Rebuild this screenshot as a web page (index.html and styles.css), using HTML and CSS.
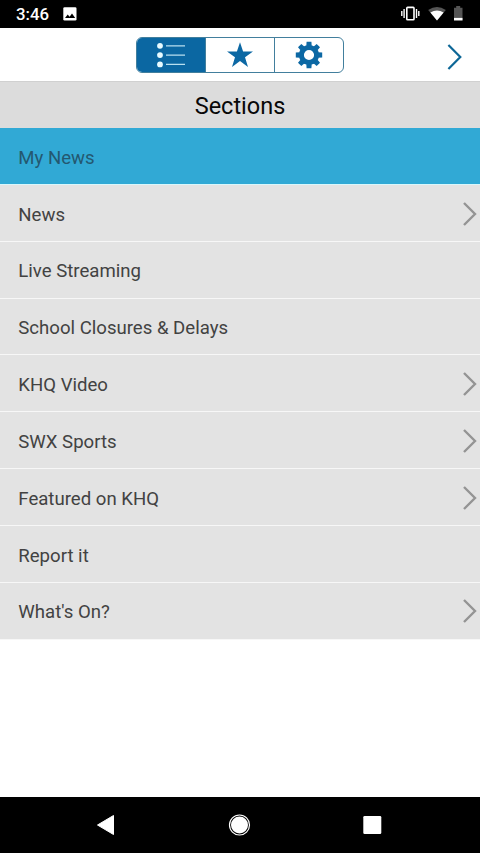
FILE: index.html
```html
<!DOCTYPE html>
<html lang="en">
<head>
<meta charset="utf-8">
<title>Sections</title>
<link rel="stylesheet" href="styles.css">
</head>
<body>
<div class="status">
  <span class="clock">3:46</span>
  <svg class="photo" width="14" height="14" viewBox="0 0 14 14"><rect x=".3" y=".3" width="13.2" height="13.2" rx="1.3" fill="#fff"/><path d="M2 11 4.7 7.5l1.9 2.3L9 6.6l3.2 4.4z" fill="#000"/></svg>
  <svg class="indicators" width="64" height="18" viewBox="0 0 64 18">
    <path d="M1.8 7v5M4.1 5v9M16.500 5v9M18.800 7v5" stroke="#fff" stroke-width="1.4"/>
    <rect x="6.800" y="3.400" width="7.200" height="12.400" rx=".8" fill="none" stroke="#fff" stroke-width="1.6"/>
    <path d="M28.200 5.900Q37 .1 45.800 5.900L37 16.400z" fill="#555"/>
    <path d="M30.400 8.500Q37 4.600 43.600 8.500L37 16.400z" fill="#fff"/>
    <path d="M56.200 2h4v1.700h2.300v12.700h-8.500V3.700h2.200z" fill="#555"/>
    <path d="M54 13.900h8.500v2.500H54z" fill="#fff"/>
  </svg>
</div>
<header class="toolbar">
  <div class="tabs">
    <div class="tab active"><svg width="30" height="26" viewBox="0 0 30 26"><g fill="#e8fbff"><circle cx="4" cy="3.800" r="2.900"/><circle cx="4" cy="13.100" r="2.900"/><circle cx="4" cy="22.400" r="2.900"/></g><path d="M10 3.800h19M10 13.100h19M10 22.400h19" stroke="#b9e0f0" stroke-width="1.300"/></svg></div>
    <div class="tab"><svg width="28" height="28" viewBox="-14 -14 28 28"><path d="M0-12.800 3.100-3.600 13-3.600 5 2.200 8 12 0 6.100-8 12-5 2.200-13-3.600-3.100-3.600z" fill="#0c68a4"/></svg></div>
    <div class="tab"><svg width="28" height="28" viewBox="-14 -14 28 28"><circle r="7.600" fill="none" stroke="#0c68a4" stroke-width="5"/><g fill="#0c68a4"><path id="tooth" d="M-2.700-9-2.400-13.200H2.400L2.700-9z"/><use href="#tooth" transform="rotate(45)"/><use href="#tooth" transform="rotate(90)"/><use href="#tooth" transform="rotate(135)"/><use href="#tooth" transform="rotate(180)"/><use href="#tooth" transform="rotate(225)"/><use href="#tooth" transform="rotate(270)"/><use href="#tooth" transform="rotate(315)"/></g></svg></div>
  </div>
  <svg class="forward" width="16" height="26" viewBox="0 0 16 26"><path d="M1.400 1 13.300 13 1.400 25" fill="none" stroke="#0d6797" stroke-width="2.200"/></svg>
</header>
<h1 class="title">Sections</h1>
<ul class="list">
  <li class="row selected">My News</li>
  <li class="row">News<svg class="chevron" viewBox="0 0 14 24"><path d="M1 1 12 12 1 23"/></svg></li>
  <li class="row">Live Streaming</li>
  <li class="row">School Closures &amp; Delays</li>
  <li class="row">KHQ Video<svg class="chevron" viewBox="0 0 14 24"><path d="M1 1 12 12 1 23"/></svg></li>
  <li class="row">SWX Sports<svg class="chevron" viewBox="0 0 14 24"><path d="M1 1 12 12 1 23"/></svg></li>
  <li class="row">Featured on KHQ<svg class="chevron" viewBox="0 0 14 24"><path d="M1 1 12 12 1 23"/></svg></li>
  <li class="row">Report it</li>
  <li class="row">What's On?<svg class="chevron" viewBox="0 0 14 24"><path d="M1 1 12 12 1 23"/></svg></li>
</ul>
<nav class="navbar">
  <svg width="24" height="24" viewBox="0 0 24 24"><path d="M3.500 12 19.500 2.500v19z" fill="#fff" stroke="#fff" stroke-linejoin="round"/></svg>
  <svg width="24" height="24" viewBox="0 0 24 24"><circle cx="12.500" cy="12" r="10" fill="none" stroke="#fff" stroke-width="1.200"/><circle cx="12.500" cy="12" r="8.500" fill="#fff"/></svg>
  <svg width="24" height="24" viewBox="0 0 24 24"><rect x="3.300" y="3" width="18" height="18" rx="1.300" fill="#fff"/></svg>
</nav>
</body>
</html>
```
FILE: styles.css
```css
* { box-sizing: border-box; }
body {
  margin: 0;
  height: 853px;
  display: flex;
  flex-direction: column;
  overflow: hidden;
  background: #fff;
  font-family: Roboto, "Liberation Sans", sans-serif;
}
svg { display: block; flex: none; }
.status {
  height: 28px;
  display: flex;
  align-items: center;
  padding: 0 16px 0 16px;
  background: #000;
  color: #fff;
}
.clock { width: 47px; font-size: 16.800px; font-weight: 500; line-height: 28px; }
.indicators { margin-left: auto; margin-top: -2px; }
.toolbar {
  height: 53px;
  display: grid;
  grid-template-columns: 1fr 208px 1fr;
  align-items: center;
}
.tabs {
  grid-column: 2;
  height: 36px;
  display: grid;
  grid-template-columns: 68px 69px 1fr;
  border: 1px solid #427f9d;
  border-radius: 6px;
  overflow: hidden;
}
.tab { display: flex; align-items: center; justify-content: center; }
.tab:last-child { padding-right: 1px; }
.tab + .tab { border-left: 1px solid #427f9d; }
.active { background: #0b67a2; }
.forward { justify-self: end; margin: 4px 17px 0 0; }
.title {
  height: 47px;
  margin: 0;
  padding-top: 1px;
  background: #dcdcdc;
  border-top: 1px solid #d0d0d0;
  color: #080808;
  font-size: 23.500px;
  font-weight: 400;
  line-height: 47px;
  text-align: center;
}
.list { flex: 1; margin: 0; padding: 0; list-style: none; }
.row {
  height: 56.850px;
  display: flex;
  align-items: center;
  justify-content: space-between;
  padding: 3.500px 3px 0 18.300px;
  background: #e3e3e3;
  border-bottom: 1px solid #f7f7f7;
  color: #424242;
  font-size: 18.600px;
}
.selected { background: #31a9d5; border-bottom-color: #d9f7fb; color: #245870; }
.chevron { width: 14px; height: 24px; margin-top: -2px; fill: none; stroke: #949494; stroke-width: 2.400; }
.navbar {
  height: 56px;
  display: flex;
  justify-content: space-between;
  align-items: center;
  padding: 0 96px 0 94px;
  background: #000;
}
```
